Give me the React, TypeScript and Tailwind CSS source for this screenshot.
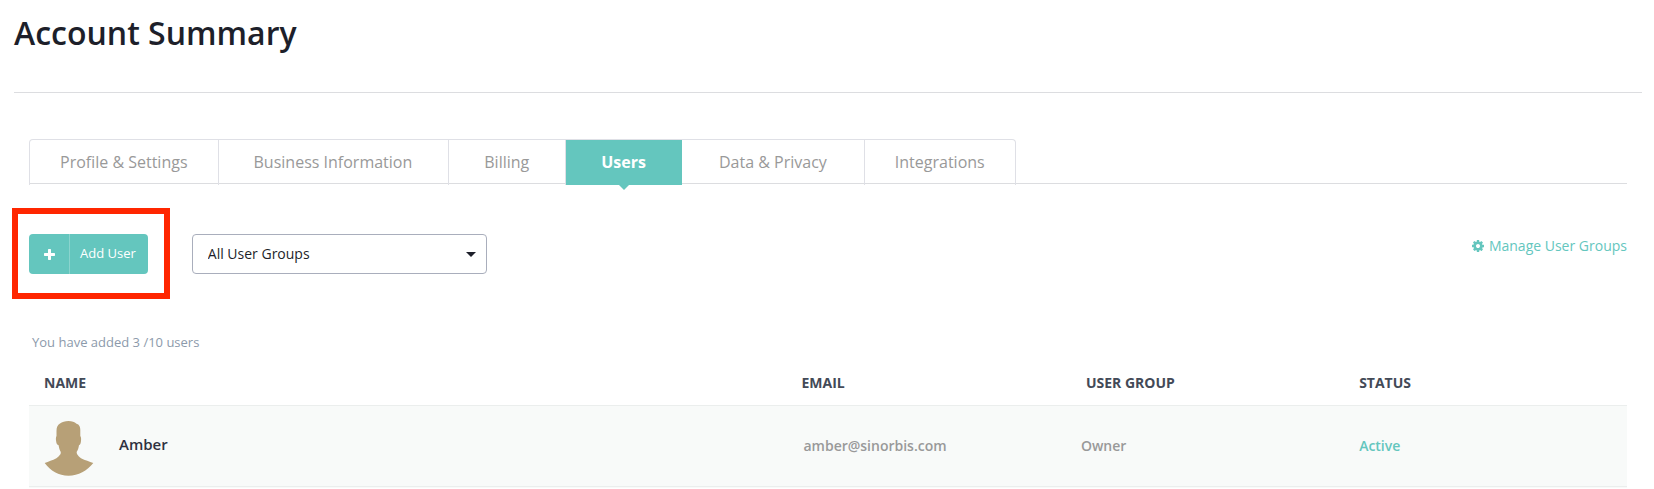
const tabs = [
    { label: 'Profile & Settings', className: 'rounded-tl border-l px-[30px]' },
    { label: 'Business Information', className: 'pr-9 pl-[35px]' },
    { label: 'Billing', className: 'pr-9 pl-[35px]' },
    { label: 'Users', active: true, className: 'pr-9 pl-[35px]' },
    { label: 'Data & Privacy', className: 'px-[37px]' },
    { label: 'Integrations', className: 'rounded-tr px-[30px]' },
];

const users = [
    { name: 'Amber', email: 'amber@sinorbis.com', group: 'Owner', status: 'Active' },
];

function PlusIcon() {
    return (
        <svg className="size-[11px]" viewBox="192 128 1408 1408" fill="currentColor" aria-hidden="true">
            <path d="M1600 736v192q0 40-28 68t-68 28h-416v416q0 40-28 68t-68 28h-192q-40 0-68-28t-28-68v-416h-416q-40 0-68-28t-28-68v-192q0-40 28-68t68-28h416v-416q0-40 28-68t68-28h192q40 0 68 28t28 68v416h416q40 0 68 28t28 68z" />
        </svg>
    );
}

function CogIcon() {
    return (
        <svg className="size-3" viewBox="128 128 1536 1536" fill="currentColor" aria-hidden="true">
            <path d="M1152 896q0-106-75-181t-181-75-181 75-75 181 75 181 181 75 181-75 75-181zm512-109v222q0 12-8 23t-20 13l-185 28q-19 54-39 91 35 50 107 138 10 12 10 25t-9 23q-27 37-99 108t-94 71q-12 0-26-9l-138-108q-44 23-91 38-16 136-29 186-7 28-36 28h-222q-14 0-24.500-8.500t-11.500-21.500l-28-184q-49-16-90-37l-141 107q-10 9-25 9-14 0-25-11-126-114-165-168-7-10-7-23 0-12 8-23 15-21 51-66.500t54-70.500q-27-50-41-99l-183-27q-13-2-21-12.500t-8-23.500v-222q0-12 8-23t19-13l186-28q14-46 39-92-40-57-107-138-10-12-10-24 0-10 9-23 26-36 98.500-107.500t94.500-71.500q13 0 26 10l138 107q44-23 91-38 16-136 29-186 7-28 36-28h222q14 0 24.500 8.500t11.500 21.500l28 184q49 16 90 37l142-107q9-9 24-9 13 0 25 10 129 119 165 170 7 8 7 22 0 12-8 23-15 21-51 66.500t-54 70.500q26 50 41 98l183 28q13 2 21 12.500t8 23.500z" />
        </svg>
    );
}

function Avatar() {
    return (
        <svg width="50" height="56" viewBox="0 0 50 56" fill="#b7a077" aria-hidden="true">
            <path d="M24.500 1c-3.500 0-6.500 1-8.500 2.500-2.500 1.500-3.500 4-3.500 7.500v5c-.7 1-.7 3-.4 5 .3 2.500 1 4 2.500 4.300.5 2.700 1 5 2.200 6.700l-.2 2c-1 1.500-2.500 3-4.200 4.300C8.500 40.500 4.500 41.500.7 43 6.500 51 14.500 55.700 24.500 55.700S43 51 49.300 43c-3.800-1.500-8.300-2.500-12.300-4.700-1.700-1.300-3.200-2.800-4-4.300l-.4-2c1.400-1.700 1.900-4 2.400-6.700 1.200-.3 1.700-1.800 2-4.300.2-2 .2-4-.7-5v-6c0-3.500-1-5.300-3.800-6.200-2-1.800-4.500-2.800-8-2.800z" />
        </svg>
    );
}

function Tabs() {
    return (
        <nav className="flex border-b border-[#dcdde0]">
            {tabs.map((tab) =>
                tab.active ? (
                    <a
                        key={tab.label}
                        href="#"
                        aria-current="page"
                        className={`relative -mb-[2px] border-t border-[#dfe0e6] bg-[#64c6be] bg-clip-padding pt-[10px] pb-[11px] font-bold text-white ${tab.className}`}
                    >
                        {tab.label}
                        <span className="absolute top-full left-1/2 -translate-x-1/2 border-x-[5px] border-t-[5px] border-x-transparent border-t-[#64c6be]" />
                    </a>
                ) : (
                    <a
                        key={tab.label}
                        href="#"
                        className={`-mb-[2px] border-t border-r border-[#dfe0e6] pt-[10px] pb-[11px] text-[#999] ${tab.className}`}
                    >
                        {tab.label}
                    </a>
                )
            )}
        </nav>
    );
}

function Toolbar() {
    return (
        <div className="mt-6 -ml-[17px] flex items-start justify-between">
            <div className="flex items-start gap-[22px]">
                <div className="border-6 border-[#ff2600] pt-5 pr-4 pb-[19px] pl-[11px]">
                    <button className="flex h-10 items-center rounded bg-[#64c6be] text-[13px] text-white">
                        <span className="flex h-full w-[41px] items-center justify-center border-r border-[#8ad4ce]">
                            <PlusIcon />
                        </span>
                        <span className="pr-3 pl-[10px]">Add User</span>
                    </button>
                </div>
                <div className="relative mt-[26px]">
                    <select
                        aria-label="User group"
                        className="h-10 w-[295px] appearance-none rounded border border-[#a9aebc] bg-white px-[15px] text-sm text-[#1d1f2a]"
                    >
                        <option>All User Groups</option>
                    </select>
                    <span className="pointer-events-none absolute top-[18px] right-[11px] border-x-[5px] border-t-[5px] border-x-transparent border-t-[#1d1f2a]" />
                </div>
            </div>
            <a href="#" className="mt-7 flex items-center gap-[5px] text-sm text-[#64c6be]">
                <CogIcon />
                Manage User Groups
            </a>
        </div>
    );
}

function UserTable() {
    return (
        <table className="w-full table-fixed text-left text-sm">
            <colgroup>
                <col className="w-[47.4%]" />
                <col className="w-[17.8%]" />
                <col className="w-[17.1%]" />
                <col />
            </colgroup>
            <thead className="text-[#434a57]">
                <tr className="h-11">
                    <th className="pl-[15px]">NAME</th>
                    <th className="pl-[15px]">EMAIL</th>
                    <th className="pl-[15px]">USER GROUP</th>
                    <th className="pl-[15px]">STATUS</th>
                </tr>
            </thead>
            <tbody className="font-semibold text-[#999]">
                {users.map((user) => (
                    <tr key={user.name} className="h-[81px] border-y border-[#ebeeed] bg-[#f8faf9]">
                        <td className="pt-1 pl-[15px]">
                            <div className="flex items-center gap-[25px] text-[15px] text-[#2f3140]">
                                <Avatar />
                                <span className="pb-1.5">{user.name}</span>
                            </div>
                        </td>
                        <td className="pl-[17px]">{user.email}</td>
                        <td className="pl-[10px]">{user.group}</td>
                        <td className="pl-[15px] text-[#64c6be]">{user.status}</td>
                    </tr>
                ))}
                <tr className="h-[2px] bg-[#f8faf9]">
                    <td colSpan={4} />
                </tr>
            </tbody>
        </table>
    );
}

export default function App() {
    return (
        <main className="bg-white pr-3 pl-[14px] font-['Open_Sans',sans-serif]">
            <h1 className="border-b border-[#dcdde0] pt-[13px] pb-[39px] text-[32px] leading-10 font-semibold text-[#1d1f2a]">
                Account Summary
            </h1>
            <div className="mt-[46px] px-[15px]">
                <Tabs />
                <Toolbar />
                <p className="mt-[33px] pl-[3px] text-[13px] leading-5 text-[#8c9aab]">You have added 3 /10 users</p>
                <div className="mt-[9px]">
                    <UserTable />
                </div>
            </div>
        </main>
    );
}
